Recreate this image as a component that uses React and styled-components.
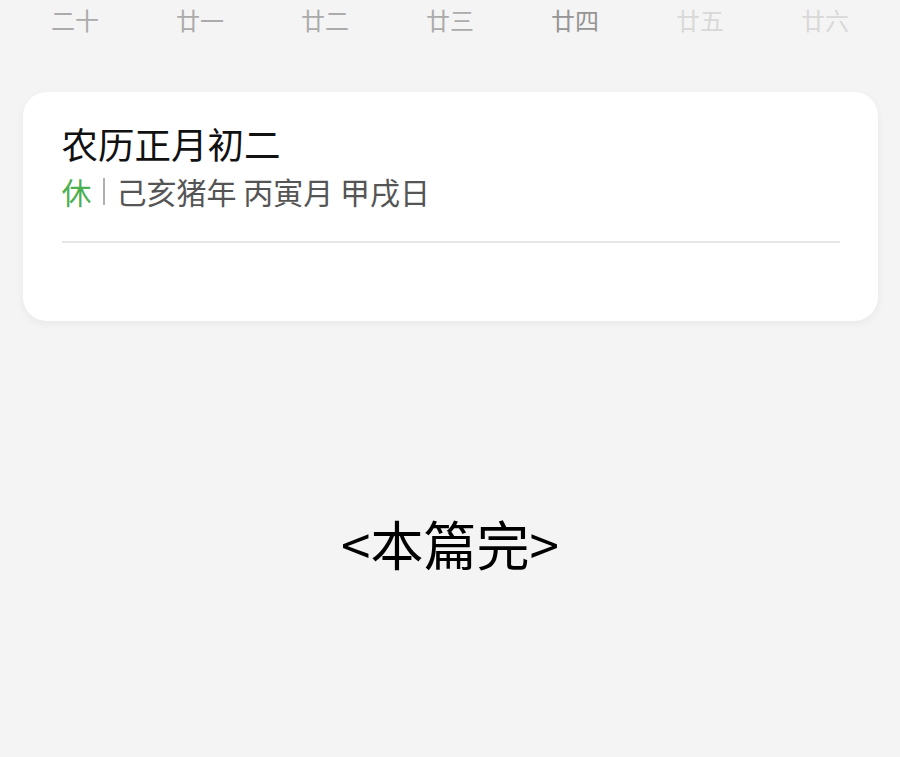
import styled, { createGlobalStyle } from "styled-components";

const GlobalStyle = createGlobalStyle`
    html, body {
        margin: 0;
        padding: 0;
        background: #f4f4f4;
        font-family: "Noto Sans CJK SC", "Noto Sans", sans-serif;
    }
`

const Page = styled.div`
    width: 900px;
    height: 757px;
    background: #f4f4f4;
    display: flex;
    flex-direction: column;
    align-items: center;
`
const WeekRow = styled.div`
    width: 875px;
    display: grid;
    grid-template-columns: repeat(7, 1fr);
    padding-top: 3px;
`
const DayLabel = styled.span`
    text-align: center;
    font-size: 24px;
    line-height: 34px;
    color: ${p => p.$faded ? "#d8d8d8" : p.$strong ? "#959595" : "#ababab"};
`
const Card = styled.section`
    box-sizing: border-box;
    width: 855px;
    height: 229px;
    margin-top: 55px;
    padding: 29px 38px 0 39px;
    background: #fff;
    border-radius: 24px;
    box-shadow: 0 3px 8px rgba(0, 0, 0, 0.05);
`
const Title = styled.h1`
    margin: 0;
    font-size: 36.5px;
    font-weight: 400;
    line-height: 46px;
    color: #111;
`
const Info = styled.div`
    display: flex;
    align-items: center;
    margin-top: 4px;
    font-size: 30px;
    line-height: 40px;
    color: #555;
`
const Rest = styled.span`
    color: #4caf50;
`
const Bar = styled.span`
    width: 2px;
    height: 27px;
    margin: 0 12px 0 11px;
    background: #b0b0b0;
`
const Divider = styled.hr`
    margin: 30px 0 0;
    border: none;
    border-top: 2px solid #e6e6e6;
`
const EndNote = styled.div`
    margin-top: 186px;
    font-size: 53px;
    line-height: 72px;
    color: #000;
`

const days = ["二十", "廿一", "廿二", "廿三", "廿四", "廿五", "廿六"]

export default function App() {
    return (
        <Page>
            <GlobalStyle />
            <WeekRow>
                {days.map((d, i) => (
                    <DayLabel key={d} $strong={i === 4} $faded={i > 4}>{d}</DayLabel>
                ))}
            </WeekRow>
            <Card>
                <Title>农历正月初二</Title>
                <Info>
                    <Rest>休</Rest>
                    <Bar />
                    己亥猪年 丙寅月 甲戌日
                </Info>
                <Divider />
            </Card>
            <EndNote>&lt;本篇完&gt;</EndNote>
        </Page>
    )
}
